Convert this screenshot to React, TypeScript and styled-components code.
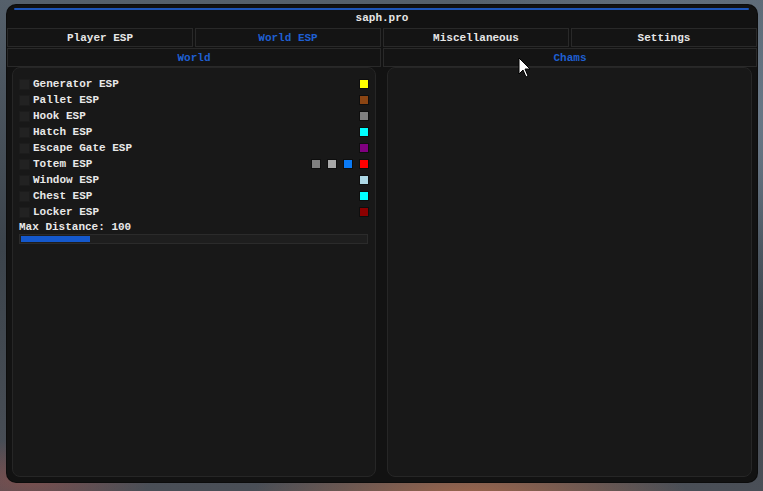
import React, { useState } from 'react';
import styled, { createGlobalStyle } from 'styled-components';

const GlobalStyle = createGlobalStyle`
  html, body {
    margin: 0;
    padding: 0;
    width: 763px;
    height: 491px;
    overflow: hidden;
  }
  body {
    background:
      radial-gradient(ellipse 220px 60px at 470px 500px, rgba(190, 110, 70, 0.75), transparent),
      radial-gradient(ellipse 120px 40px at 30px 480px, rgba(170, 80, 70, 0.5), transparent),
      radial-gradient(ellipse 300px 200px at 700px 120px, #6f7f8f, transparent),
      linear-gradient(180deg, #55606b 0%, #3c444c 50%, #4a4f57 100%);
    font-family: 'Liberation Mono', 'DejaVu Sans Mono', monospace;
  }
`;

const Window = styled.div`
  position: relative;
  margin: 5px 0 0 7px;
  width: 750px;
  height: 477px;
  background: #121212;
  border-radius: 9px;
  box-shadow: 0 0 0 1px #0c0c0c;
  display: flex;
  flex-direction: column;
  overflow: hidden;
`;

const TitleBar = styled.div`
  height: 22px;
  display: flex;
  flex-direction: column;
  align-items: stretch;
`;

const AccentLine = styled.div`
  margin: 3px 8px 0 7px;
  height: 2px;
  background: #1d55b8;
  border-radius: 1px;
`;

const Title = styled.div`
  flex: 1;
  display: flex;
  align-items: center;
  justify-content: center;
  color: #e6e6e6;
  font-size: 11px;
  font-weight: bold;
  padding-bottom: 2px;
`;

const TabRow = styled.div<{ $cols: number }>`
  display: grid;
  grid-template-columns: repeat(${(p) => p.$cols}, 1fr);
  gap: 2px;
  height: 19px;
  margin-top: 1px;
`;

const Tab = styled.div<{ $active?: boolean }>`
  display: flex;
  align-items: center;
  justify-content: center;
  background: #141414;
  border: 1px solid #292929;
  color: ${(p) => (p.$active ? '#1f5fd1' : '#e6e6e6')};
  font-size: 11px;
  font-weight: bold;
  padding-top: 1px;
`;

const Content = styled.div`
  flex: 1;
  display: grid;
  grid-template-columns: 364px 365px;
  gap: 11px;
  padding: 0 6px 5px 5px;
`;

const Panel = styled.div`
  background: #181818;
  border: 1px solid #262626;
  border-radius: 8px;
  padding: 8px 6px 0 6px;
  display: flex;
  flex-direction: column;
`;

const Row = styled.div`
  display: flex;
  align-items: center;
  height: 16px;
`;

const Check = styled.div`
  width: 9px;
  height: 9px;
  background: #222222;
  border: 1px solid #1c1c1c;
  margin-right: 3px;
  flex-shrink: 0;
`;

const Label = styled.span`
  color: #e8e8e8;
  font-size: 11px;
  font-weight: bold;
  flex: 1;
`;

const Swatches = styled.div`
  display: flex;
  gap: 6px;
`;

const Swatch = styled.div<{ $color: string }>`
  width: 8px;
  height: 8px;
  background: ${(p) => p.$color};
  border: 1px solid #0e0e0e;
`;

const SliderLabel = styled.div`
  color: #e8e8e8;
  font-size: 11px;
  font-weight: bold;
  margin-top: 1px;
  line-height: 13px;
`;

const SliderTrack = styled.div`
  width: 345px;
  height: 6px;
  background: #1e1e1e;
  border: 1px solid #2b2b2b;
  padding: 1px;
`;

const SliderFill = styled.div`
  height: 100%;
  background: #1458cc;
`;

const Cursor = styled.svg`
  position: absolute;
  left: 518px;
  top: 57px;
`;

const items: { name: string; colors: string[] }[] = [
  { name: 'Generator ESP', colors: ['#ffff00'] },
  { name: 'Pallet ESP', colors: ['#8b4513'] },
  { name: 'Hook ESP', colors: ['#808080'] },
  { name: 'Hatch ESP', colors: ['#00ffff'] },
  { name: 'Escape Gate ESP', colors: ['#800080'] },
  { name: 'Totem ESP', colors: ['#808080', '#a9a9a9', '#0a7af5', '#ff0000'] },
  { name: 'Window ESP', colors: ['#add8e6'] },
  { name: 'Chest ESP', colors: ['#00ffff'] },
  { name: 'Locker ESP', colors: ['#8b0000'] },
];

const tabs = ['Player ESP', 'World ESP', 'Miscellaneous', 'Settings'];

export default function App() {
  const [tab] = useState(1);
  const distance = 100;

  return (
    <>
      <GlobalStyle />
      <Window>
        <TitleBar>
          <AccentLine />
          <Title>saph.pro</Title>
        </TitleBar>
        <TabRow $cols={4}>
          {tabs.map((t, i) => (
            <Tab key={t} $active={i === tab}>
              {t}
            </Tab>
          ))}
        </TabRow>
        <TabRow $cols={2}>
          <Tab $active>World</Tab>
          <Tab $active>Chams</Tab>
        </TabRow>
        <Content>
          <Panel>
            {items.map((it) => (
              <Row key={it.name}>
                <Check />
                <Label>{it.name}</Label>
                <Swatches>
                  {it.colors.map((c, i) => (
                    <Swatch key={i} $color={c} />
                  ))}
                </Swatches>
              </Row>
            ))}
            <SliderLabel>Max Distance: {distance}</SliderLabel>
            <SliderTrack>
              <SliderFill style={{ width: `${(distance / 500) * 100}%` }} />
            </SliderTrack>
          </Panel>
          <Panel />
        </Content>
      </Window>
      <Cursor width="14" height="22" viewBox="0 0 14 22">
        <path d="M1 1 L1 17 L5 13 L8 20 L10 19 L7 12 L12 12 Z" fill="#fff" stroke="#000" strokeWidth="1" />
      </Cursor>
    </>
  );
}
